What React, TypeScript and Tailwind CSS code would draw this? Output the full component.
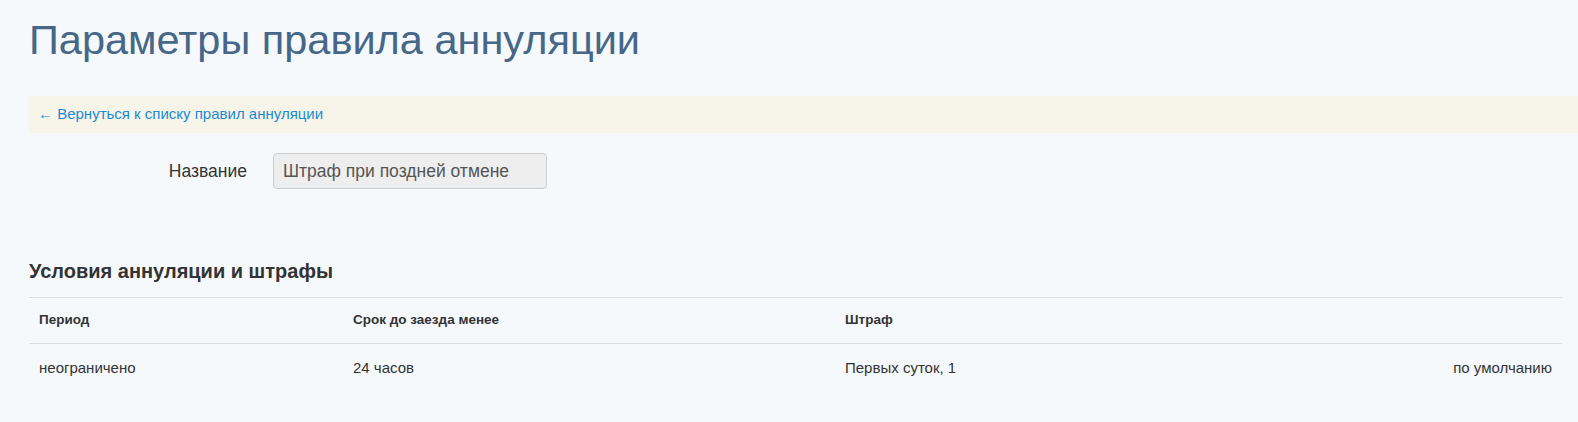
export default function App() {
  const rows = [
    { period: "неограничено", term: "24 часов", fine: "Первых суток, 1", note: "по умолчанию" },
  ];

  return (
    <div
      className="min-h-[422px] w-full bg-[#f5f9fc] text-[#333333]"
      style={{ fontFamily: '"Liberation Sans", Arial, sans-serif' }}
    >
      <div className="pl-[29px] pr-[16px] pt-[17px]">
        <h1 className="text-[41.5px] leading-[46px] font-normal text-[#466788]">
          Параметры правила аннуляции
        </h1>

        <div className="mt-[33px] -mr-[16px] flex h-[37px] items-center bg-[#f7f5e9] pl-[9px]">
          <a href="#" className="text-[15px] text-[#1b8ad3]">
            ← Вернуться к списку правил аннуляции
          </a>
        </div>

        <div className="mt-[20px] flex items-center">
          <label className="w-[218px] text-right text-[17.5px] text-[#333333]">Название</label>
          <div className="ml-[26px] flex h-[36px] w-[274px] items-center rounded-[4px] border border-[#cccccc] bg-[#eeeeee] px-[9px] text-[17.5px] text-[#555555]">
            Штраф при поздней отмене
          </div>
        </div>

        <h2 className="mt-[70px] text-[20px] leading-[24px] font-bold text-[#333333]">
          Условия аннуляции и штрафы
        </h2>

        <div className="mt-[14px] w-[1533px] border-t border-[#dddddd]">
          <div className="grid h-[46px] grid-cols-[314px_492px_1fr_auto] items-center border-b border-[#dddddd] text-[13.5px] font-bold">
            <div className="px-[10px]">Период</div>
            <div className="px-[10px]">Срок до заезда менее</div>
            <div className="px-[10px]">Штраф</div>
            <div className="px-[10px]"></div>
          </div>
          {rows.map((r) => (
            <div
              key={r.period}
              className="grid h-[48px] grid-cols-[314px_492px_1fr_auto] items-center text-[15px]"
            >
              <div className="px-[10px]">{r.period}</div>
              <div className="px-[10px]">{r.term}</div>
              <div className="px-[10px]">{r.fine}</div>
              <div className="px-[10px] text-right">{r.note}</div>
            </div>
          ))}
        </div>
      </div>
    </div>
  );
}
